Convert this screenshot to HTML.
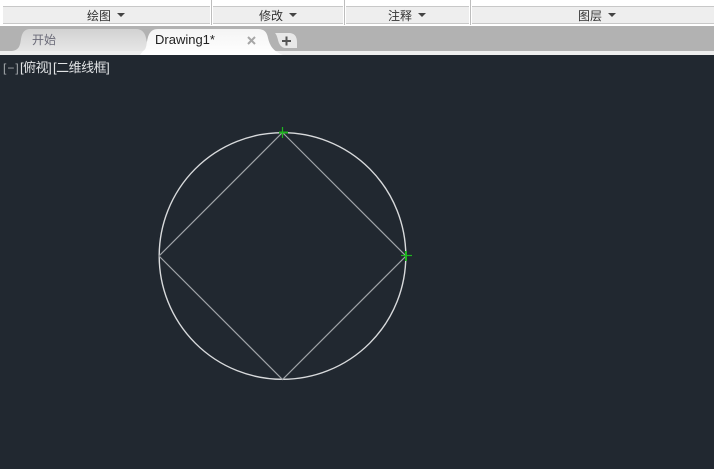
<!DOCTYPE html>
<html><head><meta charset="utf-8">
<style>
html,body{margin:0;padding:0;background:#212830}
#p{position:relative;width:714px;height:469px;overflow:hidden;background:#212830;font-family:"Liberation Sans","Noto Sans CJK SC",sans-serif}
.a{position:absolute}
.t{position:absolute;top:8px;font-size:12px;line-height:16px;color:#333;white-space:nowrap}
.c{position:absolute;top:13px;width:0;height:0;border-left:4px solid transparent;border-right:4px solid transparent;border-top:4px solid #444}
.l{position:absolute;top:60px;font-size:13px;line-height:16px;color:#e2e4e6;white-space:nowrap;letter-spacing:-.5px}
.s{position:absolute;top:0;width:3px;height:25px;background:#fff}
.s i{position:absolute;left:1px;top:0;width:1px;height:25px;background:#bdbdbd}
</style></head><body><div id="p">
<div class="a" style="left:0;top:0;width:714px;height:26px;background:#fff"></div>
<div class="a" style="left:3px;top:6px;width:711px;height:18px;background:#eee;border-top:1px solid #c8c8c8;border-bottom:1px solid #c8c8c8;box-sizing:border-box"></div>
<div class="s" style="left:210px"><i></i></div>
<div class="s" style="left:343px"><i></i></div>
<div class="s" style="left:469px"><i></i></div>
<div class="t" style="left:87px">绘图</div><div class="c" style="left:117px"></div>
<div class="t" style="left:259px">修改</div><div class="c" style="left:289px"></div>
<div class="t" style="left:388px">注释</div><div class="c" style="left:418px"></div>
<div class="t" style="left:578px">图层</div><div class="c" style="left:608px"></div>
<div class="a" style="left:0;top:26px;width:714px;height:25px;background:#b2b2b2"></div>
<div class="a" style="left:0;top:51px;width:714px;height:4px;background:#eee"></div>
<svg class="a" style="left:0;top:0" width="714" height="469" viewBox="0 0 714 469">
<defs><linearGradient id="g" x1="0" y1="0" x2="0" y2="1"><stop offset="0" stop-color="#d2d2d2"/><stop offset="1" stop-color="#e6e6e6"/></linearGradient>
<linearGradient id="w" x1="0" y1="0" x2="0" y2="1"><stop offset="0" stop-color="#f4f4f4"/><stop offset="1" stop-color="#fff"/></linearGradient></defs>
<path d="M12 51C19 50 20 46 21 39C22 32 25 29 30 29H136C142 29 145 33 146 38C147 45 150 50 156 51Z" fill="url(#g)"/>
<path d="M143 51C147 49 146 44 148 37C150 31 153 29 158 29H258C264 29 267 32 268 38C270 46 273 51 283 55H140Z" fill="url(#w)"/>
<path d="M275 33H289C294 33 297 36 297 42V48H286C281 48 279 44 278 40C277 36 276 34 275 33Z" fill="#e8e8e8"/>
<g fill="none" stroke="#555" stroke-width="2"><path d="M282 41H291M286.500 36.500V45.500"/></g>
<g fill="none" stroke="#a6a6a6" stroke-width="2"><path d="M248 37L255 44M255 37L248 44"/></g>
<circle cx="282.500" cy="256" r="123.300" fill="none" stroke="#d8dadc" stroke-width="1.400"/>
<path d="M282.500 132.500L406 256L282.500 379.500L159 256Z" fill="none" stroke="#a0a4a8" stroke-width="1.200"/>
<g stroke="#1fb51f" fill="none"><path d="M279 132.500H288" stroke-width="2"/><path d="M282.500 127V138" stroke-width="1.200"/><path d="M406 251V261" stroke-width="2"/><path d="M401 255.500H412" stroke-width="1.200"/></g>
</svg>
<div class="a" style="left:32px;top:32px;font-size:12px;line-height:16px;color:#6a6a78">开始</div>
<div class="a" style="left:155px;top:32px;font-size:13px;line-height:16px;color:#222">Drawing1*</div>
<div class="l" style="left:3px;font-size:12px;color:#a4a8ac;letter-spacing:1px">[−]</div>
<div class="l" style="left:20px">[俯视]</div>
<div class="l" style="left:53px">[二维线框]</div>
</div></body></html>
